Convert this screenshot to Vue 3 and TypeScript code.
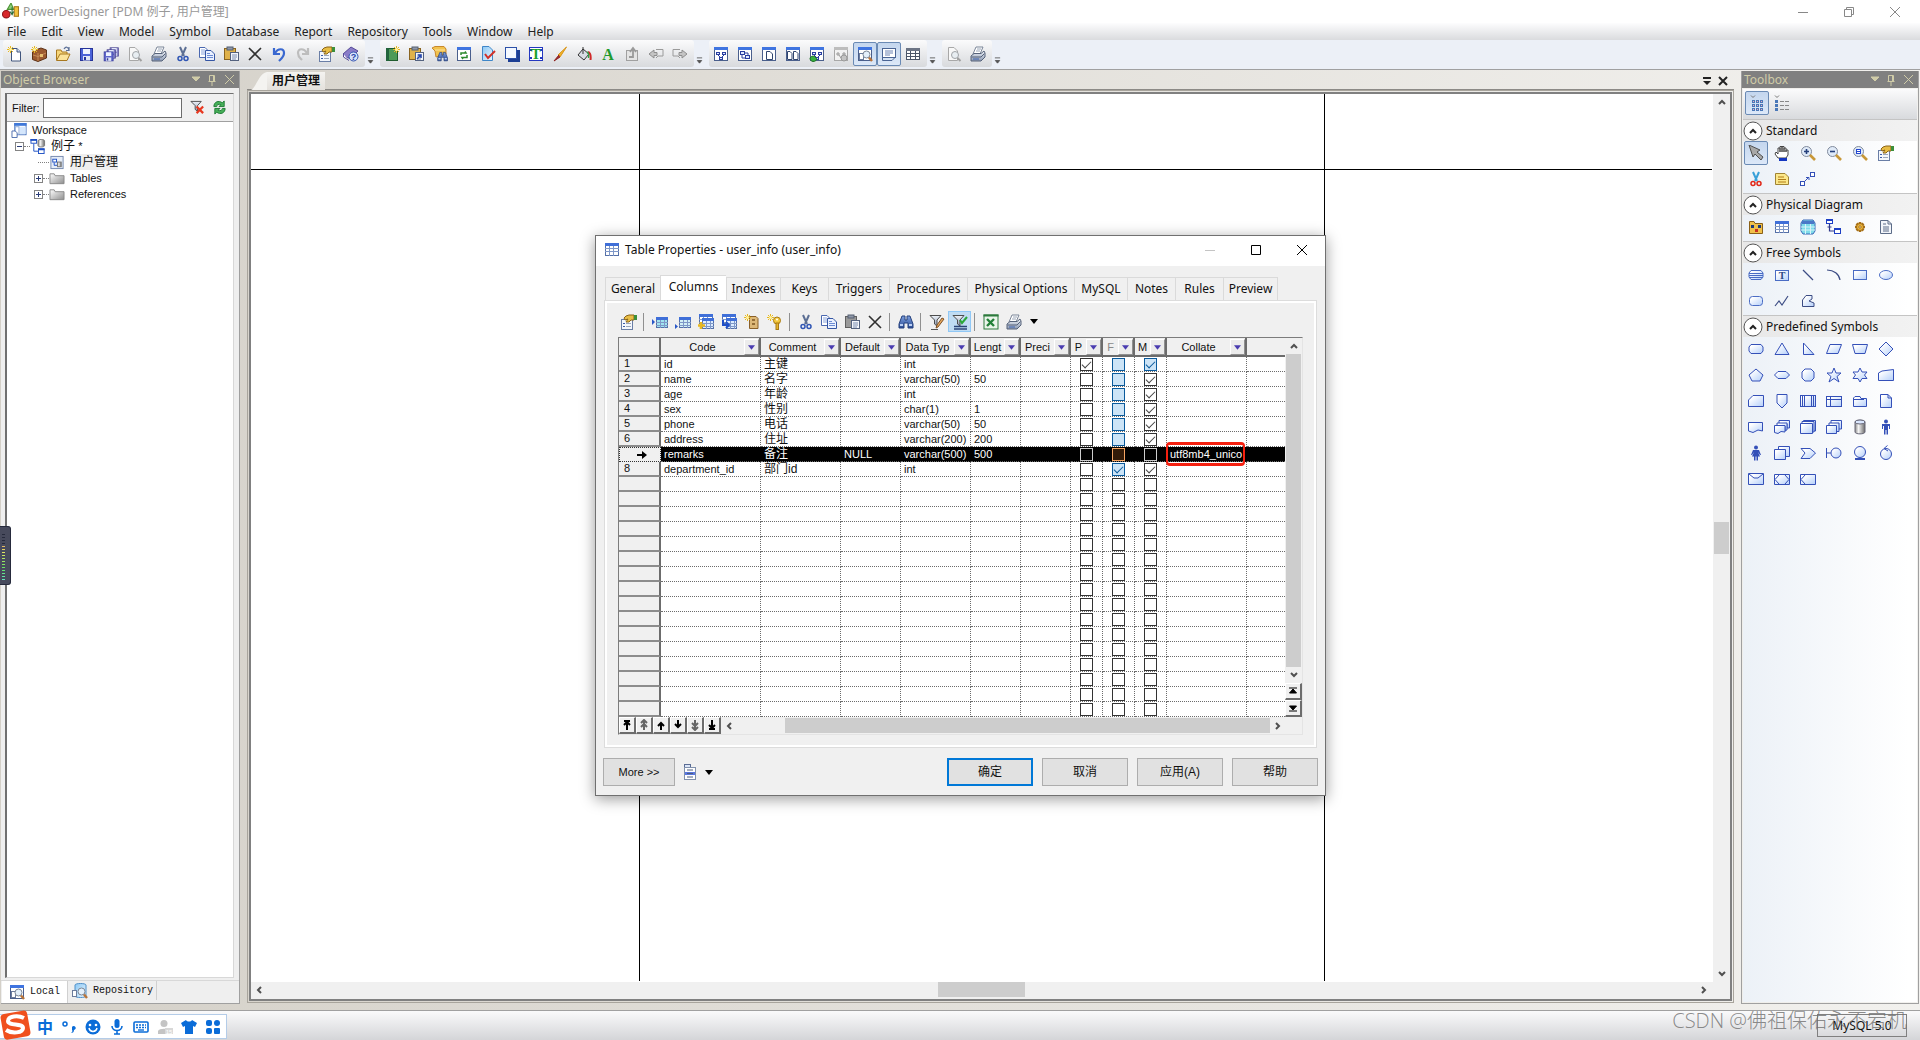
<script setup lang="ts">
import { ref } from 'vue'

type Tri = 'off' | 'on' | 'hot' | 'hotOn'

interface ColumnRow {
  code: string
  comment: string
  def?: string
  type: string
  length?: string
  p: Tri
  f: Tri
  m: Tri
  collate?: string
  selected?: boolean
}

const filter = ref('')

const menus = ['File', 'Edit', 'View', 'Model', 'Symbol', 'Database', 'Report', 'Repository', 'Tools', 'Window', 'Help']

// Small builders for 16x16 icon markup
const rc = (x: number, y: number, w: number, h: number, fill: string, stroke = 'none') =>
  `<rect x="${x}" y="${y}" width="${w}" height="${h}" fill="${fill}" stroke="${stroke}"/>`
const pa = (d: string, fill: string, stroke = 'none', sw = 1) =>
  `<path d="${d}" fill="${fill}" stroke="${stroke}" stroke-width="${sw}"/>`
const ci = (x: number, y: number, r: number, fill: string, stroke = 'none', sw = 1) =>
  `<circle cx="${x}" cy="${y}" r="${r}" fill="${fill}" stroke="${stroke}" stroke-width="${sw}"/>`
const tx = (x: number, y: number, size: number, fill: string, s: string, family = 'Liberation Serif') =>
  `<text x="${x}" y="${y}" font-size="${size}" font-weight="bold" fill="${fill}" text-anchor="middle" font-family="${family}">${s}</text>`

const star = pa('M3.5 0V7M0 3.5H7M1 1L6 6M6 1L1 6', 'none', '#e8b820') + ci(3.5, 3.5, 1.5, '#fff3a0')
const starTR = `<g transform="translate(9 0)">${star}</g>`
const lens = ci(8, 8, 3, '#e4f0fb', '#7d8796') + pa('M10.5 10.5L14 14', 'none', '#c98a3a', 2)
const printer =
  pa('M6 1H13L10 8H3Z', '#fff', '#7b8698') +
  pa('M7 3H11M6 5H10', 'none', '#9aa6b8') +
  pa('M1 10L4 7.500H11L14 5L15 7V11L11 15H1Z', 'url(#steel)', '#56637a') +
  pa('M1.500 11H11L14.500 7.500', 'none', '#56637a') +
  pa('M3 13H9', 'none', '#3f63b0', 1)
const floppy = (fill: string, stroke: string) =>
  rc(1.5, 2.5, 12, 12, fill, stroke) + rc(4, 3, 7, 5, '#eef3ff') + rc(4, 10, 7, 4.5, '#dfe6f5') + rc(5, 11, 2, 3, stroke)
const windowFrame = rc(1.5, 1.5, 13, 13, '#fff', '#4a5f8c') + rc(1, 1, 14, 3, '#3f74e0')
const miniDiagram =
  rc(3.5, 6.5, 3, 2, '#dfe8ff', '#2a3ea0') + rc(9.5, 6.5, 3, 2, '#dfe8ff', '#2a3ea0') +
  rc(6.5, 11.5, 3, 2, '#dfe8ff', '#2a3ea0') + pa('M5 9L7 11M11 9L9 11', 'none', '#2a3ea0')
const gridBody = (x: number, y: number, w: number, h: number, body: string) =>
  rc(x + 0.5, y + 0.5, w - 1, h - 1, body, '#5570a8') + rc(x, y, w, 3, '#3f6fd8') +
  pa(`M${x} ${y + 5.5}h${w}M${x} ${y + 8.5}h${w}M${x + 4.5} ${y + 3}v${h - 3}M${x + 8.5} ${y + 3}v${h - 3}`, 'none', '#7f98c8')
const hand =
  rc(0.5, 5.5, 11, 10, '#f4f7fc', '#6a7ea6') +
  pa('M2 9.500H4M2 12.500H4', 'none', '#3c5ca8') + pa('M5 9.500H10M5 12.500H10', 'none', '#9aa6bc') +
  pa('M3 4L5 2L8 1H13V6L10 6L8 8L5 8L7 5L4 6Z', '#e8bd45', '#8a6418') + rc(13, 1, 3, 5, '#3c8f3a')
const scissors = (blade: string, ring: string) =>
  pa('M5 1L9 10M11 1L7 10', 'none', blade, 2) + ci(5, 12.5, 2, 'none', ring, 1.5) + ci(11, 12.5, 2, 'none', ring, 1.5)
const board = (a: string, b: string) =>
  rc(1.5, 2.5, 11, 11, a, b) + rc(4, 1, 6, 3, '#8f98a8', '#555f70') + rc(7.5, 6.5, 8, 8, '#f3f6fb', '#54627f') +
  pa('M9 9H14M9 11H14M9 13H13', 'none', '#7a8cb0')
const copyPages =
  pa('M0.500 1.500H6L8.500 4V11.500H0.500Z', '#fff', '#4a68b0') + pa('M2 4H6M2 6H6M2 8H6', 'none', '#8aa4dc') +
  pa('M6.500 4.500H12L15.500 8V14.500H6.500Z', '#eaf1ff', '#3556a4') + pa('M8 7.500H11M8 9.500H14M8 11.500H14', 'none', '#6c8cd4')
const binoc =
  pa('M4 2H7V6H9V2H12L15 10V14H10V9H6V14H1V10Z', 'url(#navy)', '#25407c') + pa('M2 11H5M11 11H14', 'none', '#bcd0f4', 2)
const bluePage = pa('M2.500 0.500H9L12.500 4V14.500H2.500Z', 'url(#sky)', '#3f86c8')
const funnel = pa('M1 1.500H12L8 6V12L5.500 10V6Z', 'url(#steel)', '#4c4c4c')
const sh = '#3450b8'
const shape = (d: string) => pa(d, 'url(#pale)', sh)

const icons: Record<string, string> = {
  new: pa('M4.500 2.500H10L13.500 6V15H4.500Z', '#fff', '#40557c') + pa('M10 2.500V6H13.500', '#cfdcf4', '#40557c') + star,
  project: pa('M1.500 5L10 2L15.500 4V12L7 15.500L1.500 13.500Z', '#9c5a30', '#5e3216') + pa('M2 9L7 10.500L15 7M7 7V15', 'none', '#c88c58') + rc(9, 8, 3, 3, '#e8c070') + star,
  open: pa('M1.500 14V4H6L7 6H12V8', '#f6d67a', '#a87820') + pa('M1.500 14.500L5 8H15L12 14.500Z', '#fbe39a', '#a87820') + pa('M9 3C11 0 13 1 14 4M14 1V4.500H11', 'none', '#5b6f96', 1.2),
  save: floppy('#4a62d8', '#26349a'),
  saveAll: `<g transform="translate(6 0) scale(.7)">${floppy('#8a86c8', '#4b4790')}</g><g transform="translate(3 2) scale(.7)">${floppy('#7a76c4', '#443f8c')}</g><g transform="translate(0 4) scale(.75)">${floppy('#5f66cc', '#34389a')}</g>`,
  preview: pa('M2.500 1.500H8L11.500 5V14.500H2.500Z', '#f8f8f8', '#a8a8a8') + ci(9, 9, 3.5, '#e8eef2', '#a0a4a8') + pa('M11.500 12L14.500 15', 'none', '#a0a0a0', 2),
  print: printer,
  cut: scissors('#5c6f94', '#2f55b4'),
  copy: copyPages,
  paste: board('#e0b24a', '#8a6420'),
  pasteGray: board('#9a9a9a', '#606060'),
  del: pa('M2 2L14 14M14 2L2 14', 'none', '#303030', 1.6),
  undo: pa('M3 2V8H9M4 7C7 2 13 2 13 7C13 11 10 13 8 15', 'none', '#3a68d0', 2.2),
  redo: pa('M13 2V8H7M12 7C9 2 3 2 3 7C3 11 5 12 7 14', 'none', '#bdbdbd', 2.2),
  props: hand,
  help: pa('M0 8L8 1L15 5L8 12L4 12Z', '#8a7cc8', '#564a98') + pa('M0.500 8V11L6 14.500', '#fff', '#564a98') + ci(10.5, 10.5, 4.5, '#d6e2fa', '#3454b0') + tx(10.5, 13.5, 9, '#2443a8', '?', 'Liberation Sans'),
  book: rc(2.5, 2.5, 11, 12, '#4d9a58', '#1f5c2e') + rc(2, 2, 3, 13, '#22633a') + starTR,
  pasteLink: board('#e0b24a', '#8a6420') + pa('M9 13L13 9M10 9H13V12', 'none', '#2748b0', 1.4),
  find: pa('M0 2L3 0.500H12L14 3V8L4 11L3 5Z', '#f2c24c', '#c8882c') + pa('M3 4H13', 'none', '#fbe3a0') + `<g transform="translate(5 5) scale(.7)">${binoc}</g>`,
  refresh: windowFrame + pa('M5 9V7H10L9 5.500M11 9V11.500H6L7 13', 'none', '#2d8a2d', 1.5),
  check: bluePage + pa('M5 8L8 12L15 5', 'none', '#d03028', 2),
  shadow: rc(4, 4, 12, 12, '#1d3f94') + rc(1.5, 1.5, 11, 11, '#f4f8ff', '#2c50a8'),
  textTool: rc(1.5, 1.5, 13, 13, '#fff', '#2438c0') + pa('M1 4H4M12 4H15M1 12H4M12 12H15', 'none', '#2438c0', 2) + tx(8, 13, 14, '#18a028', 'T'),
  brush: pa('M14.500 1L6 9L8 11Z', '#f2b52a', '#d89418') + pa('M7 9L2 15L8 11', '#a02828', '#8c2020'),
  bucket: pa('M7 3L13 8L8 14L2 9Z', '#d8dce4', '#333') + pa('M7 1V8', 'none', '#333') + pa('M12 6C15 7 15 10 14.500 14', 'none', '#d02828', 2) + pa('M11 6C13 7 13 9 12.500 12', 'none', '#2fa048', 1.4),
  fontA: tx(8, 14, 16, '#1f9a2e', 'A'),
  rotate: rc(2.5, 4.5, 11, 10, '#e4e4e4', '#a0a0a0') + pa('M5 11H9V3M6 6L9 2L12 6', 'none', '#9a9a9a', 1.8),
  back: pa('M1 8L6 4V6.500H9V9.500H6V12Z', '#c4c4c4', '#8e8e8e') + pa('M8 3.500H15V10H10L8 12', 'none', '#9a9a9a'),
  forward: pa('M15 8L10 4V6.500H7V9.500H10V12Z', '#c4c4c4', '#8e8e8e') + pa('M8 3.500H1V10H6L8 12', 'none', '#9a9a9a'),
  dg1: windowFrame + miniDiagram,
  dg2: windowFrame + rc(3.5, 5.5, 4, 3, '#dfe8ff', '#2a3ea0') + rc(8.5, 9.5, 4, 3, '#dfe8ff', '#2a3ea0') + pa('M5 9V12H8M8 7H11V9', 'none', '#2a3ea0'),
  dg3: windowFrame + pa('M5.500 5.500H9L11.500 8V13.500H5.500Z', '#fff', '#30456e'),
  dg4: windowFrame + pa('M2.500 5.500H5L7 7.500V13.500H2.500Z', '#fff', '#30456e') + pa('M8.500 5.500H11L13 7.500V13.500H8.500Z', '#fff', '#30456e'),
  dg5: windowFrame + miniDiagram + pa('M1 12C3 9 6 10 7 12C9 13 7 15.500 4 15.500C2 15 1 14 1 12Z', '#38b040', '#1c7024'),
  dgGray: rc(1.5, 1.5, 13, 13, '#f2f2f2', '#a8a8a8') + rc(1, 1, 14, 3, '#bdbdbd') + pa('M4 7H6V9H4ZM10 7H12V9H10ZM6 9L8 12L10 9', 'none', '#999') + ci(11, 12, 3, '#c4c4c4', '#999'),
  lensWin: windowFrame + rc(2.5, 7.5, 4, 6, '#fff', '#6c7c9c') + ci(9.5, 8.5, 3.5, '#e4f0fb', '#7d8796') + pa('M12 11.500L15 15', 'none', '#b8743a', 2.4),
  lensDb: pa('M3 2C3 0 14 0 14 2V13C14 15 3 15 3 13Z', 'url(#sky)', '#4f8fc8') + rc(0.5, 7.5, 4, 6, '#fff', '#6c7c9c') + ci(9.5, 8.5, 3.5, '#e4f0fb', '#7d8796') + pa('M12 11.500L15 15', 'none', '#b8743a', 2.4),
  note: rc(1.5, 2.5, 13, 9, '#fff', '#4a6494') + pa('M4 5H12M4 7H12M4 9H9', 'none', '#6c84b4') + pa('M1.500 11.500V14.500H11L13.500 12', 'none', '#4a6494'),
  tableDark: rc(1.5, 2.5, 13, 11, '#fff', '#4c5668') + rc(1, 2, 14, 3, '#6c7484') + pa('M1 7.500H15M1 10.500H15M5.500 5V13M10.500 5V13', 'none', '#4c5668'),
  workspace: rc(3.5, 0.5, 12, 12, '#fff', '#3b68b8') + rc(3, 0, 13, 3, '#3f78d8') + rc(9, 4, 6, 8, '#d4e6fc') + rc(4, 4, 4, 8, '#fff', '#86a4d4') + pa('M0.500 8.500H4L6 10.500V15.500H0.500Z', '#fff', '#4c6cac'),
  model: pa('M8 2C8 0 15 0 15 2V7C15 9 8 9 8 7Z', 'url(#cyl)', '#777') + rc(0.5, 0.5, 6, 4, '#fff', '#1d4fc4') + rc(0, 0, 7, 2, '#1d4fc4') + pa('M3.500 5V13H8', 'none', '#1d4fc4') + rc(8.5, 10.5, 6, 5, '#fff', '#1d4fc4') + rc(8, 10, 7, 2, '#1d4fc4'),
  diagram: rc(1.5, 1.5, 13, 13, '#e6edf8', '#7286ac') + rc(3.5, 4.5, 4, 3, '#fff', '#1d4fc4') + pa('M5 8V11H8', 'none', '#1d4fc4') + rc(8.5, 7.5, 4, 5, 'url(#cyl)', '#777'),
  folder: pa('M0.500 13.500V3H5L6 5H15.500V13.500Z', 'url(#fold)', '#8a8a8a'),
  filterClear: funnel + pa('M7 7L14 14M14 7L7 14', 'none', '#e83820', 2.4),
  reload: pa('M2 7C2 2 7 0 11 3L13 1V7H7.500L9.500 5C7 4 5 5 5 7Z', '#46b058', '#1e7a34') + pa('M14 9C14 14 9 16 5 13L3 15V9H8.500L6.500 11C9 12 11 11 11 9Z', '#46b058', '#1e7a34'),
  table: gridBody(1, 1, 14, 13, '#fff'),
  rowIns: gridBody(4, 3, 12, 11, '#9fe4f0') + pa('M0 5L3 8L0 11Z', '#2a58c8'),
  rowAdd: gridBody(4, 3, 12, 11, '#d2f0f6') + pa('M0 10L3 12.500L0 15Z', '#2a58c8'),
  colAdd: gridBody(1, 0, 14, 10, '#fff') + gridBody(4, 4, 12, 11, '#dcecff') + pa('M3 8V15M0 11.500H7', 'none', '#e8b820', 2.6),
  colRep: gridBody(1, 0, 14, 10, '#fff') + gridBody(5, 4, 11, 11, '#dcecff') + pa('M2 6V11H7M5 8L8 11L5 14', 'none', '#1f4fc8', 2),
  domain: pa('M5.500 2.500H12L14 4.500V14.500H5.500Z', '#ddb878', '#8a6028') + pa('M8 6H11M8 10H11', 'none', '#7c5420', 1.5) + star,
  key: ci(10, 6.5, 3.5, '#f4c93c', '#a87a14') + ci(10, 5.5, 1, '#fff') + rc(9, 9, 2.5, 6.5, '#e8b62c', '#a87a14') + star,
  binoc,
  filterEdit: funnel + pa('M15 5L9 13L7 14L8 11L13 4Z', '#e8a85c', '#7c5028') + pa('M2 15.500H9', 'none', '#555'),
  filterOn: funnel + pa('M8 6L10 9L15 3', 'none', '#2aa83a', 2) + pa('M2 12.500H15M2 15H15', 'none', '#2b4478', 1.6),
  excel: rc(1, 1, 14, 14, '#eaf5ea', '#2c7a3c') + rc(0.5, 0.5, 15, 2, '#2c7a3c') + pa('M4 5L11 12M11 5L4 12', 'none', '#228038', 2.4),
  sheet: rc(2.5, 0.5, 6, 3, '#dce6f8', '#5a6c94') + rc(2.5, 3.500, 11, 12, '#fff', '#8090ac') + rc(3, 8, 10, 3, '#5a78e0') + pa('M5 6H11M5 9.500H11M5 13H11', 'none', '#4c5c7c'),
  pointer: pa('M1 0L5 12L7 9L13 15L15 12L9 7L12 5Z', '#a8a8a8', '#505050'),
  palm: pa('M4 13L1 9L2 7L4 9V3H6V7V1.500H8V7V1.500H10V7V3H12V7V5H14V10L12 13Z', '#fff', '#444') + rc(5, 13, 8, 3, '#1436c0'),
  zoomIn: ci(6.5, 6.5, 5, '#dfeaf8', '#808a9c') + pa('M4 6.500H9M6.500 4V9', 'none', '#25407c', 1.6) + pa('M10 10L15 15', 'none', '#c89838', 2.6),
  zoomOut: ci(6.5, 6.5, 5, '#dfeaf8', '#808a9c') + pa('M4 6.500H9', 'none', '#25407c', 1.6) + pa('M10 10L15 15', 'none', '#c89838', 2.6),
  zoomPage: ci(6.5, 6.5, 5, '#dfeaf8', '#808a9c') + rc(4.5, 4.5, 4, 4, '#fff', '#2448d0') + pa('M4 6.500H9', 'none', '#2448d0') + pa('M10 10L15 15', 'none', '#c89838', 2.6),
  cutRed: scissors('#38a0d8', '#e02818'),
  memo: pa('M1.500 2.500H11L14.500 6V13.500H1.500Z', '#fce88a', '#a08434') + pa('M4 6H10M4 8.500H12M4 11H12', 'none', '#b07c18'),
  link: rc(0.5, 10.5, 4, 4, '#fff', sh) + rc(10.5, 1.5, 4, 4, '#fff', sh) + pa('M5 10L9 6M6 6.500H9V9', 'none', sh),
  pkg: pa('M1.500 2.500H6L7 4.500H14.500V14.500H1.500Z', '#f0c04a', '#8a6018') + rc(3, 6, 3, 3, '#1e3a78') + rc(10, 6, 3, 3, '#1e3a78') + rc(7, 10, 3, 3, '#c83020'),
  tbl: gridBody(1, 2, 14, 12, '#fff'),
  view: pa('M1 4L3 1H13L15 4V12L13 15H3L1 12Z', '#7fdcea', '#3a68b8') + rc(2, 2, 12, 3, '#4a78c8') + pa('M1 8H15M1 11H15M5.500 5V15M10.500 5V15', 'none', '#d8f4f8'),
  refLink: rc(0.5, 0.5, 6, 4, '#fff', '#1d3fc4') + pa('M3.500 5V12H8M1.500 8H5.500M3.500 6V9', 'none', '#303a8c', 1.2) + rc(8.5, 9.5, 6, 5, '#fff', '#1d3fc4') + rc(8, 9, 7, 2, '#1d3fc4') + rc(0, 0, 7, 2, '#1d3fc4'),
  gear: pa('M8 3V13M3 8H13M4.500 4.500L11.500 11.500M11.500 4.500L4.500 11.500', 'none', '#a87018', 2.6) + ci(8, 8, 3.5, '#f0b83c', '#a06c14') + ci(8, 8, 1.2, '#fff', '#a06c14'),
  file: pa('M2.500 1.500H10L13.500 5V14.500H2.500Z', '#f2f5fa', '#5c6c88') + pa('M10 1.500V5H13.500M5 5H8M5 8H11M5 10H11M5 12H11', 'none', '#5c6c88'),
  title: pa('M3 3.500H13L15 6V10L13 12.500H3L1 10V6Z', 'url(#pale)', '#4a6cc4') + pa('M1 6.500H15M1 8.500H15M1 10.500H15', 'none', '#4a6cc4'),
  textBox: rc(1.5, 3.500, 13, 10, 'url(#pale)', '#4a6cc4') + tx(8, 12, 10, '#2c4684', 'T'),
  line: pa('M3 3L13 13', 'none', '#3c4c84', 1.2),
  arc: pa('M1 3C8 3 13 7 14 13', 'none', '#3c4c84', 1.2),
  rect: rc(1.5, 3.5, 13, 9, 'url(#pale)', '#4a6cc4'),
  ellipse: `<ellipse cx="8" cy="8" rx="6.5" ry="4.500" fill="url(#pale)" stroke="#4a6cc4"/>`,
  rrect: `<rect x="1.500" y="3.500" width="13" height="9" rx="3" fill="url(#pale)" stroke="#4a6cc4"/>`,
  poly: pa('M1 13L5 8L8 12L14 3', 'none', '#3c4c84', 1.2),
  blob: pa('M2.500 13.500V7L6 2.500H12V6L9 8L14 10V13.500Z', 'url(#pale)', '#3c4c84'),
  s1: shape('M3 3.500H13L15 6V10L13 12.500H3L1 10V6Z'),
  s2: shape('M8 2L15 13.500H1Z'),
  s3: shape('M3.500 2L14 13.500H3.500Z'),
  s4: shape('M4 3.500H15.500L12 12.500H0.500Z'),
  s5: shape('M0.500 3.500H15.500L13 12.500H3Z'),
  s6: shape('M8 1L15 8L8 15L1 8Z'),
  s7: shape('M8 2L15 8L12 14H4L1 8Z'),
  s8: shape('M4 4.500H12L15.500 8L12 11.500H4L0.500 8Z'),
  s9: shape('M5 2H11L14 5V11L11 14H5L2 11V5Z'),
  s10: shape('M8 1L10 6H15L11 9.500L13 15L8 11.500L3 15L5 9.500L1 6H6Z'),
  s11: shape('M8 1L10 5H15L12.500 8L15 11.500H10L8 15L6 11.500H1L3.500 8L1 5H6Z'),
  s12: shape('M0.500 13.500V6L4 4L15.500 2.500V13.500Z'),
  s13: shape('M0.500 13.500V7L5 2.500H15.500V13.500Z'),
  s14: shape('M3 1.500H13V10L8 15L3 10Z'),
  s15: rc(0.5, 2.5, 15, 11, 'url(#pale)', sh) + pa('M4.500 3V13M11.500 3V13M2.500 3V13M13.500 3V13', 'none', sh),
  s16: rc(0.5, 3.5, 15, 10, 'url(#pale)', sh) + pa('M1 6.500H15M4.500 3V13', 'none', sh),
  s17: shape('M1.500 13.500V5L3 3.500H8L9 5.500H14.500V13.500Z') + pa('M2 6.500H12', 'none', sh),
  s18: shape('M2.500 1.500H10L13.500 5V14.500H2.500Z') + pa('M10 1.500V5H13.500', 'none', sh),
  s19: shape('M0.500 3.500H14.500V12L10 11L5 13.500L0.500 12Z'),
  s20: shape('M5 1.500H15.500V9H13V5H5Z') + shape('M3 4H13V11L11 11.500V7H3Z') + shape('M0.500 6.500H11V13L7 12.500L4 14.500L0.500 13.500Z'),
  s21: shape('M3.500 1.500H15.500V12H3.500Z') + shape('M2 2.500H14V13H2Z') + shape('M0.500 4.500H12.500V14.500H0.500Z'),
  s22: shape('M5 1.500H15.500V10H5Z') + shape('M3 4H13V12.500H3Z') + shape('M0.500 6.500H10.500V14.500H0.500Z'),
  s23: pa('M3 3C3 0.500 13 0.500 13 3V13C13 15.500 3 15.500 3 13Z', 'url(#cyl)', '#667') + `<ellipse cx="8" cy="3" rx="5" ry="2" fill="#dbe8ff" stroke="#667"/>`,
  s24: ci(8, 2.5, 2, sh) + pa('M4 5H12V10H11V7H10V15.500H8.500V11H7.500V15.500H6V7H5V10H4Z', sh),
  s25: ci(8, 2.5, 2, sh) + pa('M5 5H11L13 10H12L10 7L12 11.500H10V15.500H8.500V11.500H7.500V15.500H6V11.500H4L6 7L4 10H3Z', sh),
  s26: shape('M4.500 1.500H15.500V11.500H4.500Z') + shape('M0.500 4.500H11.500V14.500H0.500Z'),
  s27: shape('M1 3.500H10L15.500 8L10 13.500H1L5 8Z'),
  s28: ci(10, 8, 5, 'url(#pale)', sh) + pa('M0.500 3V13M1 8H5', 'none', sh),
  s29: ci(8, 7, 5.5, 'url(#pale)', sh) + pa('M3 14H13', 'none', sh, 2),
  s30: ci(8, 9, 5.5, 'url(#pale)', sh) + pa('M9.500 0.500L6 3.500L10 6', 'none', sh),
  s31: shape('M0.500 2.500H15.500V13.500H0.500Z') + pa('M1 3L6 7H10L15 3', 'none', sh),
  s32: shape('M0.500 3.500H15.500V13.500H0.500Z') + pa('M5 4L1 8.500L5 13M11 4L15 8.500L11 13', 'none', sh),
  s33: shape('M0.500 3.500H15.500V13.500H0.500Z') + pa('M5 4L1 8.500L5 13', 'none', sh),
  gridView: [0, 1, 2].map(r => [0, 1, 2].map(c => rc(3 + c * 4, 5 + r * 4, 3, 3, '#4a78b8') + rc(4 + c * 4, 6 + r * 4, 1, 1, '#f4a8b8')).join('')).join('') + pa('M2 0.500L4 2.500L6 0.500', 'none', '#777'),
  listView: [0, 1, 2].map(r => rc(1, 5 + r * 4, 3, 3, '#4a78b8') + pa(`M6 ${6.5 + r * 4}h4m1 0h4`, 'none', '#888')).join('') + pa('M1 0.500L3 2.500L5 0.500', 'none', '#777'),
}

const toolGroups: string[][] = [
  ['new', 'project', 'open', 'save', 'saveAll', 'preview', 'print', 'cut', 'copy', 'paste', 'del', 'undo', 'redo', 'props', 'help'],
  ['book', 'pasteLink', 'find', 'refresh', 'check', 'shadow', 'textTool', 'brush', 'bucket', 'fontA', 'rotate', 'back', 'forward'],
  ['dg1', 'dg2', 'dg3', 'dg4', 'dg5', 'dgGray', 'lensWin', 'note', 'tableDark'],
  ['preview', 'print'],
]
const pressed = ['lensWin', 'note']

const sections = [
  { name: 'Standard', items: ['pointer', 'palm', 'zoomIn', 'zoomOut', 'zoomPage', 'props', 'cutRed', 'memo', 'link'] },
  { name: 'Physical Diagram', items: ['pkg', 'tbl', 'view', 'refLink', 'gear', 'file'] },
  { name: 'Free Symbols', items: ['title', 'textBox', 'line', 'arc', 'rect', 'ellipse', 'rrect', 'poly', 'blob'] },
  { name: 'Predefined Symbols', items: Array.from({ length: 33 }, (_, i) => 's' + (i + 1)) },
]

const tabs = [
  { name: 'General', width: 55 },
  { name: 'Columns', width: 66 },
  { name: 'Indexes', width: 54 },
  { name: 'Keys', width: 48 },
  { name: 'Triggers', width: 61 },
  { name: 'Procedures', width: 78 },
  { name: 'Physical Options', width: 107 },
  { name: 'MySQL', width: 53 },
  { name: 'Notes', width: 48 },
  { name: 'Rules', width: 48 },
  { name: 'Preview', width: 55 },
]

const dialogTools = ['props', '|', 'rowIns', 'rowAdd', 'colAdd', 'colRep', 'domain', 'key', '|', 'cut', 'copy', 'pasteGray', 'del', '|', 'binoc', '|', 'filterEdit', 'filterOn', '|', 'excel', 'print']

const heads = [
  { name: 'Code', width: 100 },
  { name: 'Comment', width: 80 },
  { name: 'Default', width: 60 },
  { name: 'Data Typ', width: 70 },
  { name: 'Lengt', width: 50 },
  { name: 'Preci', width: 50 },
  { name: 'P', width: 32 },
  { name: 'F', width: 32 },
  { name: 'M', width: 32 },
  { name: 'Collate', width: 80 },
]

const rows: ColumnRow[] = [
  { code: 'id', comment: '主键', type: 'int', p: 'on', f: 'hot', m: 'hotOn' },
  { code: 'name', comment: '名字', type: 'varchar(50)', length: '50', p: 'off', f: 'hot', m: 'on' },
  { code: 'age', comment: '年龄', type: 'int', p: 'off', f: 'hot', m: 'on' },
  { code: 'sex', comment: '性别', type: 'char(1)', length: '1', p: 'off', f: 'hot', m: 'on' },
  { code: 'phone', comment: '电话', type: 'varchar(50)', length: '50', p: 'off', f: 'hot', m: 'on' },
  { code: 'address', comment: '住址', type: 'varchar(200)', length: '200', p: 'off', f: 'hot', m: 'on' },
  { code: 'remarks', comment: '备注', def: 'NULL', type: 'varchar(500)', length: '500', p: 'off', f: 'hot', m: 'off', collate: 'utf8mb4_unico', selected: true },
  { code: 'department_id', comment: '部门id', type: 'int', p: 'off', f: 'hotOn', m: 'on' },
  ...Array.from({ length: 16 }, (): ColumnRow => ({ code: '', comment: '', type: '', p: 'off', f: 'off', m: 'off' })),
]
const flags = ['p', 'f', 'm'] as const
const isOn = (t: Tri) => t === 'on' || t === 'hotOn'
const isHot = (t: Tri) => t === 'hot' || t === 'hotOn'

const moves = [
  { label: 'Move to top', d: 'M3 2H9M6 3V11M3 6L6 3L9 6', dim: false },
  { label: 'Page up', d: 'M6 1V11M3 4L6 1L9 4M3 8L6 5L9 8', dim: true },
  { label: 'Move up', d: 'M6 4V11M3 7L6 4L9 7', dim: false },
  { label: 'Move down', d: 'M6 1V8M3 5L6 8L9 5', dim: false },
  { label: 'Page down', d: 'M6 1V11M3 8L6 11L9 8M3 4L6 7L9 4', dim: true },
  { label: 'Move to bottom', d: 'M3 10H9M6 1V9M3 6L6 9L9 6', dim: false },
]

const meter = Array.from({ length: 16 }, (_, i) => (i < 4 ? '#262a3c' : `hsl(${40 + (i - 4) * 11} 70% 64%)`))
</script>

<template>
  <div class="app">
    <svg class="defs" width="0" height="0" aria-hidden="true">
      <defs>
        <linearGradient id="pale" x1="0" y1="0" x2="1" y2="1"><stop offset="0.2" stop-color="#fff" /><stop offset="1" stop-color="#b4cffa" /></linearGradient>
        <linearGradient id="sky" x1="0" y1="0" x2="1" y2="1"><stop offset="0" stop-color="#8cc8f4" /><stop offset="1" stop-color="#e8f5ff" /></linearGradient>
        <linearGradient id="steel" x1="0" y1="0" x2="0" y2="1"><stop offset="0" stop-color="#f0f4fa" /><stop offset="1" stop-color="#8a98b0" /></linearGradient>
        <linearGradient id="navy" x1="0" y1="0" x2="0" y2="1"><stop offset="0" stop-color="#7ca0e0" /><stop offset="1" stop-color="#2c4c94" /></linearGradient>
        <linearGradient id="cyl"><stop offset="0" stop-color="#8a8a8a" /><stop offset="0.35" stop-color="#f4f4f4" /><stop offset="1" stop-color="#6a6a6a" /></linearGradient>
        <linearGradient id="fold" x1="0" y1="0" x2="1" y2="1"><stop offset="0" stop-color="#fff" /><stop offset="1" stop-color="#8e8e8e" /></linearGradient>
      </defs>
    </svg>

    <header class="titlebar">
      <svg class="logo" viewBox="0 0 16 16"><path d="M5 6L8.500 0L11 6Z" fill="#8cd07a" stroke="#4c9434" /><rect x="11.500" y="3.500" width="4" height="9" fill="#f2c03c" stroke="#a87818" /><circle cx="4" cy="10.500" r="3.500" fill="#d8282c" stroke="#8c1418" /><path d="M9.500 4V11M7.500 8L9.500 11L11 8" fill="none" stroke="#286c38" /></svg>
      <span class="app-title">PowerDesigner [PDM 例子, 用户管理]</span>
      <div class="win-buttons">
        <button aria-label="Minimize"><svg viewBox="0 0 12 12"><path d="M1 6.500H11" /></svg></button>
        <button aria-label="Restore"><svg viewBox="0 0 12 12"><path d="M1.500 3.500H8.500V10.500H1.500ZM3.500 3.500V1.500H10.500V8.500H8.500" /></svg></button>
        <button aria-label="Close"><svg viewBox="0 0 12 12"><path d="M1 1L11 11M11 1L1 11" /></svg></button>
      </div>
    </header>

    <nav class="menubar">
      <button v-for="m in menus" :key="m">{{ m }}</button>
    </nav>

    <div class="toolbar">
      <template v-for="(g, gi) in toolGroups" :key="gi">
        <div class="tool-group">
          <button v-for="n in g" :key="n" class="tool" :class="{ pressed: pressed.includes(n) }" :aria-label="n">
            <svg viewBox="0 0 16 16" v-html="icons[n]" />
          </button>
        </div>
        <button class="overflow" aria-label="Toolbar options"><svg viewBox="0 0 8 8"><path d="M1 1H7M1.500 4H6.500L4 7Z" fill="#555" stroke="#555" /></svg></button>
      </template>
    </div>

    <main class="workarea">
      <aside class="browser">
        <div class="pane-head">
          <span>Object Browser</span>
          <svg viewBox="0 0 44 12"><path d="M1 3H9L5 7Z" fill="#d0cca8" /><path d="M17.500 7.500H24.500M18.500 7V1.500H23.500V7M22.500 2V7M21 8V12" /><path d="M34 1L43 10M43 1L34 10" /></svg>
        </div>
        <div class="browser-body">
          <div class="filter">
            <label for="tree-filter">Filter:</label>
            <input id="tree-filter" v-model="filter" type="text" />
            <button aria-label="Clear filter"><svg viewBox="0 0 16 16" v-html="icons.filterClear" /></button>
            <button aria-label="Refresh"><svg viewBox="0 0 16 16" v-html="icons.reload" /></button>
          </div>
          <ul class="tree">
            <li class="lv0"><svg class="ti" viewBox="0 0 16 16" v-html="icons.workspace" /><span>Workspace</span></li>
            <li class="lv1"><i class="exp minus" /><i class="dash" /><svg class="ti" viewBox="0 0 16 16" v-html="icons.model" /><span class="cjk">例子 <small>*</small></span></li>
            <li class="lv2"><i class="dash long" /><svg class="ti" viewBox="0 0 16 16" v-html="icons.diagram" /><span class="cjk current">用户管理</span></li>
            <li class="lv2x"><i class="exp plus" /><i class="dash" /><svg class="ti" viewBox="0 0 16 16" v-html="icons.folder" /><span>Tables</span></li>
            <li class="lv2x"><i class="exp plus" /><i class="dash" /><svg class="ti" viewBox="0 0 16 16" v-html="icons.folder" /><span>References</span></li>
          </ul>
        </div>
        <div class="browser-tabs">
          <button class="on"><svg viewBox="0 0 16 16" v-html="icons.lensWin" />Local</button>
          <button><svg viewBox="0 0 16 16" v-html="icons.lensDb" />Repository</button>
        </div>
      </aside>

      <section class="document">
        <div class="doc-tabs">
          <svg class="doc-slope" viewBox="0 0 16 18" preserveAspectRatio="none"><path d="M0 18C5 16 8 1 16 0V18Z" fill="#f4f3f0" /></svg>
          <button class="doc-tab">用户管理</button>
          <div class="doc-actions">
            <button aria-label="Window list"><svg viewBox="0 0 12 12"><path d="M2 3H10" stroke="#222" stroke-width="2" /><path d="M2 6H10L6 10Z" fill="#222" /></svg></button>
            <button aria-label="Close diagram"><svg viewBox="0 0 12 12"><path d="M2 2L10 10M10 2L2 10" stroke="#222" stroke-width="2" /></svg></button>
          </div>
        </div>
        <div class="doc-frame">
          <div class="canvas">
            <i class="guide-h" />
            <i class="guide-v a" />
            <i class="guide-v b" />
          </div>
          <div class="vbar">
            <svg class="chev" viewBox="0 0 10 10"><path d="M2 7L5 4L8 7" /></svg>
            <i class="thumb" />
            <svg class="chev" viewBox="0 0 10 10"><path d="M2 3L5 6L8 3" /></svg>
          </div>
          <div class="hbar">
            <svg class="chev" viewBox="0 0 10 10"><path d="M7 2L4 5L7 8" /></svg>
            <i class="thumb" />
            <svg class="chev" viewBox="0 0 10 10"><path d="M3 2L6 5L3 8" /></svg>
          </div>
        </div>
      </section>

      <aside class="toolbox">
        <div class="pane-head">
          <span>Toolbox</span>
          <svg viewBox="0 0 44 12"><path d="M1 3H9L5 7Z" fill="#d0cca8" /><path d="M17.500 7.500H24.500M18.500 7V1.500H23.500V7M22.500 2V7M21 8V12" /><path d="M34 1L43 10M43 1L34 10" /></svg>
        </div>
        <div class="toolbox-body">
          <div class="view-bar">
            <button class="tool pressed" aria-label="Icons"><svg viewBox="0 0 16 16" v-html="icons.gridView" /></button>
            <button class="tool" aria-label="List"><svg viewBox="0 0 16 16" v-html="icons.listView" /></button>
          </div>
          <template v-for="s in sections" :key="s.name">
            <button class="sec-head">
              <svg viewBox="0 0 20 20"><circle cx="10" cy="10" r="9" fill="#fff" stroke="#555" /><path d="M7 12L10 9L13 12" fill="none" stroke="#222" stroke-width="2" /></svg>
              {{ s.name }}
            </button>
            <div class="palette">
              <button v-for="n in s.items" :key="n" class="tool" :class="{ pressed: n === 'pointer' }" :aria-label="n">
                <svg viewBox="0 0 16 16" v-html="icons[n]" />
              </button>
            </div>
          </template>
        </div>
      </aside>
    </main>

    <footer class="status">
      <div class="ime">
        <svg class="sogou" viewBox="0 0 32 30"><rect x="2" y="2" width="27" height="26" rx="4" fill="#f0501e" transform="rotate(-10 16 15)" /><path d="M24 8C18 5 8 6 8 11C8 16 23 13 23 18C23 23 12 24 6 20" fill="none" stroke="#fff" stroke-width="4" /></svg>
        <span class="zh">中</span>
        <svg viewBox="0 0 16 16"><circle cx="4" cy="5" r="2" fill="none" stroke="#0a6cd8" stroke-width="1.500" /><path d="M11 8a2 2 0 1 1 2 3c0 2-1 3-3 3 1-1 2-2 1-3z" fill="#0a6cd8" /></svg>
        <svg viewBox="0 0 16 16"><circle cx="8" cy="8" r="7.500" fill="#0a6cd8" /><circle cx="5" cy="6" r="1.300" fill="#fff" /><circle cx="11" cy="6" r="1.300" fill="#fff" /><path d="M4 9C5 13.500 11 13.500 12 9" fill="none" stroke="#fff" stroke-width="1.500" /></svg>
        <svg viewBox="0 0 16 16"><rect x="5.500" y="0" width="5" height="9" rx="2.500" fill="#0a6cd8" /><path d="M3 7C3 13 13 13 13 7M8 11V15M5 15H11" fill="none" stroke="#0a6cd8" stroke-width="1.600" /></svg>
        <svg viewBox="0 0 16 16"><rect x="1" y="3" width="14" height="10" rx="1" fill="#fff" stroke="#0a6cd8" stroke-width="1.600" /><path d="M3 6H13M3 8.500H13" stroke="#0a6cd8" stroke-width="1.600" stroke-dasharray="2 1" /><path d="M5 11H11" stroke="#0a6cd8" stroke-width="1.400" /></svg>
        <svg viewBox="0 0 16 16"><circle cx="7" cy="4.500" r="3.500" fill="#c4c4c4" /><path d="M1 15V12C2 9 12 9 13 12V15Z" fill="#c4c4c4" /><rect x="8" y="9" width="8" height="6" fill="#d8d8d8" /><text x="12" y="14.500" font-size="6" fill="#fff" text-anchor="middle" font-family="Liberation Sans">15</text></svg>
        <svg viewBox="0 0 16 16"><path d="M5 1C6 3 10 3 11 1L16 4L14 8L12 7V15H4V7L2 8L0 4Z" fill="#0a6cd8" /></svg>
        <svg viewBox="0 0 16 16" fill="#0a6cd8"><rect x="1" y="1" width="6" height="6" rx="2" /><rect x="9" y="1" width="6" height="6" rx="3" /><rect x="1" y="9" width="6" height="6" rx="2" /><rect x="9" y="9" width="6" height="6" rx="1" /></svg>
      </div>
      <span class="dbms">MySQL 5.0</span>
      <span class="watermark">CSDN @佛祖保佑永不宕机</span>
    </footer>

    <div class="meter"><i v-for="(c, i) in meter" :key="i" :style="{ background: c }" /></div>

    <div class="dialog" role="dialog" aria-label="Table Properties">
      <div class="dlg-title">
        <svg viewBox="0 0 16 16" v-html="icons.table" />
        <span>Table Properties - user_info (user_info)</span>
        <div class="win-buttons">
          <button class="faint" aria-label="Minimize"><svg viewBox="0 0 12 12"><path d="M1 6.500H11" /></svg></button>
          <button aria-label="Maximize"><svg viewBox="0 0 12 12"><path d="M1.500 1.500H10.500V10.500H1.500Z" /></svg></button>
          <button aria-label="Close"><svg viewBox="0 0 12 12"><path d="M1 1L11 11M11 1L1 11" /></svg></button>
        </div>
      </div>

      <div class="dlg-tabs" role="tablist">
        <button v-for="t in tabs" :key="t.name" role="tab" :class="{ on: t.name === 'Columns' }" :style="{ width: t.width + 'px' }">{{ t.name }}</button>
      </div>

      <div class="page">
        <div class="dlg-tools">
          <template v-for="(n, i) in dialogTools" :key="i">
            <i v-if="n === '|'" class="sep" />
            <button v-else :class="{ lit: n === 'filterOn' }" :aria-label="n"><svg viewBox="0 0 16 16" v-html="icons[n]" /></button>
          </template>
          <svg class="tri" viewBox="0 0 8 5"><path d="M0 0H8L4 5Z" /></svg>
        </div>

        <div class="grid">
          <div class="grid-main">
            <table>
              <colgroup>
                <col style="width: 42px" />
                <col v-for="h in heads" :key="h.name" :style="{ width: h.width + 'px' }" />
                <col />
              </colgroup>
              <thead>
                <tr>
                  <th class="corner" />
                  <th v-for="h in heads" :key="h.name" :class="{ dim: h.name === 'F' }">
                    <div><span>{{ h.name }}</span><button :aria-label="'Filter ' + h.name"><svg viewBox="0 0 8 5"><path d="M0 0H8L4 5Z" /></svg></button></div>
                  </th>
                  <th />
                </tr>
              </thead>
              <tbody>
                <tr v-for="(r, i) in rows" :key="i" :class="{ sel: r.selected }">
                  <th scope="row">
                    <svg v-if="r.selected" viewBox="0 0 10 8"><path d="M0 3H5V0L10 4L5 8V5H0Z" /></svg>
                    <template v-else-if="r.code">{{ i + 1 }}</template>
                  </th>
                  <td>{{ r.code }}</td>
                  <td class="zhc">{{ r.comment }}</td>
                  <td>{{ r.def }}</td>
                  <td>{{ r.type }}</td>
                  <td>{{ r.length }}</td>
                  <td />
                  <td v-for="k in flags" :key="k" class="chk">
                    <input type="checkbox" :checked="isOn(r[k])" :class="{ hot: isHot(r[k]) }" :aria-label="k + (i + 1)" />
                  </td>
                  <td class="coll"><span v-if="r.collate" class="marked">{{ r.collate }}</span></td>
                  <td />
                </tr>
              </tbody>
            </table>
            <div class="gv">
              <svg class="chev" viewBox="0 0 10 10"><path d="M2 7L5 4L8 7" /></svg>
              <i class="gthumb" />
              <svg class="chev" viewBox="0 0 10 10"><path d="M2 3L5 6L8 3" /></svg>
              <button class="raised" aria-label="First"><svg viewBox="0 0 8 8"><path d="M0 1H8M4 2L7.500 6H0.500Z" /></svg></button>
              <button class="raised" aria-label="Last"><svg viewBox="0 0 8 8"><path d="M0 7H8M4 6L7.500 2H0.500Z" /></svg></button>
            </div>
          </div>
          <div class="gh">
            <button v-for="m in moves" :key="m.label" class="raised" :class="{ dim: m.dim }" :aria-label="m.label"><svg viewBox="0 0 12 12"><path :d="m.d" /></svg></button>
            <svg class="chev" viewBox="0 0 10 10"><path d="M7 2L4 5L7 8" /></svg>
            <i class="gthumb" />
            <svg class="chev" viewBox="0 0 10 10"><path d="M3 2L6 5L3 8" /></svg>
          </div>
        </div>
      </div>

      <div class="dlg-foot">
        <button class="btn more">More &gt;&gt;</button>
        <button class="menu-btn" aria-label="Report"><svg class="sheet" viewBox="0 0 16 16" v-html="icons.sheet" /><svg class="tri" viewBox="0 0 8 5"><path d="M0 0H8L4 5Z" /></svg></button>
        <div class="actions">
          <button class="btn primary">确定</button>
          <button class="btn">取消</button>
          <button class="btn">应用(A)</button>
          <button class="btn">帮助</button>
        </div>
      </div>
    </div>
  </div>
</template>

<style>
body {
  margin: 0;
  background: #d4d0c8;
}
</style>

<style scoped>
.app {
  position: relative;
  display: flex;
  flex-direction: column;
  min-height: 100vh;
  overflow: hidden;
  font: 12px/16px 'Noto Sans', 'Noto Sans CJK SC', sans-serif;
  color: #111;
}
.app *,
.app *::before,
.app *::after {
  box-sizing: border-box;
}
button {
  margin: 0;
  padding: 0;
  border: 0;
  background: none;
  font: inherit;
  color: inherit;
}
svg {
  display: block;
  flex: none;
}
i {
  display: block;
  flex: none;
}
.defs {
  position: absolute;
}
.titlebar {
  display: flex;
  align-items: center;
  height: 23px;
  padding: 0 2px;
  background: #fff;
  color: #999;
}
.logo {
  width: 17px;
  height: 17px;
  margin-right: 4px;
}
.win-buttons {
  display: flex;
  margin-left: auto;
}
.win-buttons button {
  width: 46px;
  height: 20px;
  display: grid;
  place-items: center;
}
.win-buttons svg {
  width: 12px;
  height: 12px;
  fill: none;
  stroke: #888;
}
.menubar {
  display: flex;
  gap: 15px;
  height: 17px;
  padding-left: 7px;
  background: linear-gradient(#fdfdfe, #dadbde);
  color: #222;
}
.menubar button {
  line-height: 17px;
}
.toolbar {
  display: flex;
  height: 30px;
  padding-left: 3px;
  background: #ecf0f7;
  border-bottom: 1px solid #a0a0a0;
}
.tool-group {
  display: flex;
  align-items: center;
  height: 27px;
  padding-right: 2px;
  border-radius: 3px;
  background: linear-gradient(#fbfbfc, #d8dadd);
}
.tool {
  display: grid;
  place-items: center;
  width: 24px;
  height: 24px;
}
.tool svg {
  width: 16px;
  height: 16px;
}
.pressed {
  border: 1px solid #6a8ab4;
  border-radius: 2px;
  background: linear-gradient(#c4d6ee, #dce8f8);
}
.overflow {
  width: 15px;
  padding: 12px 0 0 2px;
}
.overflow svg {
  width: 7px;
  height: 7px;
}
.workarea {
  flex: 1;
  display: flex;
  gap: 7px;
  padding: 1px 1px 6px;
  background: linear-gradient(90deg, #d4d0c8, #f2f1ee);
}
.pane-head {
  display: flex;
  align-items: center;
  justify-content: space-between;
  height: 17px;
  padding: 0 4px 0 2px;
  background: #808080;
  color: #d0cca8;
}
.pane-head svg {
  width: 44px;
  height: 12px;
  fill: none;
  stroke: #d0cca8;
}
.browser {
  display: flex;
  flex-direction: column;
  width: 239px;
  background: #efefef;
  border-right: 1px solid #a0a0a0;
  border-bottom: 1px solid #a0a0a0;
}
.browser-body {
  flex: 1;
  display: flex;
  flex-direction: column;
  margin: 5px 5px 2px 4px;
  border: 1px solid #d8d8d8;
  border-top: 1px solid #707070;
  border-left: 2px solid #707070;
  background: #fff;
}
.filter {
  display: flex;
  align-items: center;
  height: 28px;
  padding-left: 5px;
  background: #efefef;
  border-bottom: 1px solid #a0a0a0;
  font: 11px/14px 'Liberation Sans', sans-serif;
}
.filter label {
  width: 31px;
}
.filter input {
  width: 139px;
  height: 20px;
  margin-right: 4px;
  padding: 0 3px;
  border: 1px solid #6c6c6c;
  background: #fff;
  font: inherit;
}
.filter button {
  display: grid;
  place-items: center;
  width: 22px;
  height: 22px;
}
.filter svg {
  width: 15px;
  height: 15px;
}
.tree {
  margin: 0;
  padding: 0 0 0 4px;
  list-style: none;
  font: 11px/16px 'Liberation Sans', 'Noto Sans CJK SC', sans-serif;
}
.tree li {
  display: flex;
  align-items: center;
  height: 16px;
}
.ti {
  width: 16px;
  height: 15px;
}
.lv0 span {
  margin-left: 5px;
}
.lv1 {
  padding-left: 4px;
}
.lv1 span {
  margin-left: 5px;
}
.lv2 {
  padding-left: 27px;
}
.lv2x {
  padding-left: 23px;
}
.lv2 span,
.lv2x span {
  margin-left: 5px;
}
.cjk {
  font-size: 12px;
  white-space: pre;
}
.cjk small {
  font-size: 11px;
}
.current {
  background: #efefef;
}
.exp {
  width: 9px;
  height: 9px;
  border: 1px solid #848484;
  background: linear-gradient(#2a3c78, #2a3c78) center / 5px 1px no-repeat, #fff;
}
.plus {
  background: linear-gradient(#2a3c78, #2a3c78) center / 5px 1px no-repeat, linear-gradient(#2a3c78, #2a3c78) center / 1px 5px no-repeat, #fff;
}
.dash {
  width: 6px;
  border-top: 1px dotted #808080;
}
.dash.long {
  width: 11px;
}
.browser-tabs {
  display: flex;
  align-items: flex-start;
  height: 23px;
  padding-left: 1px;
  border-top: 1px solid #d8d8d8;
  font: 10px/18px 'Liberation Mono', monospace;
}
.browser-tabs button {
  display: flex;
  align-items: center;
  gap: 5px;
  height: 19px;
  padding: 0 3px 0 4px;
  border-right: 1px solid #d0d0d0;
}
.browser-tabs .on {
  height: 22px;
  padding: 0 7px;
  background: #fff;
}
.browser-tabs svg {
  width: 16px;
  height: 16px;
}
.document {
  flex: 1;
  min-width: 0;
  display: flex;
  flex-direction: column;
}
.doc-tabs {
  display: flex;
  height: 19px;
  padding: 1px 0 0 4px;
  border-bottom: 1px solid #8c8a86;
}
.doc-slope {
  width: 16px;
  height: 18px;
}
.doc-tab {
  height: 18px;
  padding: 0 5px 0 5px;
  background: linear-gradient(#f4f3f0, #e4e1dc);
  font-weight: bold;
  line-height: 16px;
}
.doc-actions {
  display: flex;
  align-items: center;
  gap: 4px;
  margin-left: auto;
  padding-right: 5px;
}
.doc-actions svg {
  width: 12px;
  height: 12px;
}
.doc-frame {
  flex: 1;
  display: grid;
  grid-template: 1fr 17px / 1fr 17px;
  margin: 2px 2px 3px;
  border: 2px solid #808080;
  outline: 1px solid #a8a49c;
  outline-offset: 1px;
  background: #f0f0f0;
}
.canvas {
  position: relative;
  overflow: hidden;
  background: #fff;
}
.guide-h,
.guide-v {
  position: absolute;
  background: #000;
}
.guide-h {
  left: 0;
  right: 1px;
  top: 75px;
  height: 1px;
}
.guide-v {
  top: 0;
  bottom: 1px;
  width: 1px;
}
.guide-v.a {
  left: 388px;
}
.guide-v.b {
  left: 1073px;
}
.chev {
  width: 10px;
  height: 10px;
  fill: none;
  stroke: #505050;
  stroke-width: 2;
}
.vbar,
.gv {
  display: flex;
  flex-direction: column;
  align-items: center;
  justify-content: space-between;
}
.vbar {
  padding: 3px 0;
}
.vbar .thumb {
  width: 15px;
  height: 32px;
  background: #cdcdcd;
}
.hbar {
  display: flex;
  align-items: center;
  justify-content: space-between;
  padding: 0 4px 2px 3px;
}
.hbar .thumb {
  width: 87px;
  height: 15px;
  background: #cdcdcd;
}
.toolbox {
  display: flex;
  flex-direction: column;
  width: 178px;
  border: 1px solid #a0a0a0;
  border-top: 0;
}
.toolbox-body {
  flex: 1;
  margin: 1px;
  background: linear-gradient(90deg, #ecf1f7, #fff 95%);
}
.view-bar {
  display: flex;
  align-items: center;
  gap: 1px;
  height: 30px;
  padding: 0 0 2px 2px;
  background: linear-gradient(#fbfbfc, #d8dadd);
}
.sec-head {
  display: flex;
  align-items: center;
  gap: 3px;
  width: 100%;
  height: 22px;
  border-top: 1px solid #c4c4c4;
  background: linear-gradient(90deg, #e8e8e8, #f2f2f2);
  text-align: left;
}
.sec-head svg {
  width: 20px;
  height: 20px;
}
.palette {
  display: grid;
  grid-template-columns: repeat(6, 26px);
  grid-auto-rows: 26px;
  padding-left: 1px;
}
.status {
  position: relative;
  display: flex;
  align-items: flex-start;
  justify-content: space-between;
  height: 30px;
  padding-right: 13px;
  border-top: 1px solid #a0a0a0;
  background: linear-gradient(#fafafb, #d4d5d8);
}
.ime {
  display: flex;
  align-items: center;
  gap: 8px;
  height: 25px;
  margin-top: 3px;
  padding-right: 5px;
  border: 1px solid #b4cce8;
  border-left: 0;
  background: #fff;
}
.ime svg {
  width: 16px;
  height: 16px;
}
.ime .sogou {
  width: 32px;
  height: 30px;
  margin: -4px -3px 0 0;
}
.zh {
  width: 16px;
  font-size: 16px;
  font-weight: bold;
  line-height: 20px;
  color: #0a6cd8;
}
.dbms {
  width: 90px;
  height: 23px;
  margin-top: 3px;
  border: 1px solid #808080;
  line-height: 21px;
  text-align: center;
}
.watermark {
  position: absolute;
  right: 13px;
  top: -2px;
  font: 20px/24px 'Open Sans', 'Noto Sans CJK SC', sans-serif;
  font-weight: 300;
  color: rgba(110, 110, 110, 0.8);
  white-space: nowrap;
}
.meter {
  position: absolute;
  left: 0;
  top: 526px;
  display: flex;
  flex-direction: column;
  gap: 2px;
  width: 11px;
  height: 59px;
  padding: 7px 5px 0 2px;
  border: 1px solid #262a3c;
  border-left: 0;
  border-radius: 0 3px 3px 0;
  background: #474a5c;
}
.meter i {
  height: 1px;
}

.dialog {
  position: absolute;
  left: calc(50% - 365px);
  top: 235px;
  width: 731px;
  padding-bottom: 9px;
  border: 1px solid #707070;
  background: #f0f0f0;
  box-shadow: 0 3px 14px rgba(0, 0, 0, 0.4);
}
.dlg-title {
  display: flex;
  align-items: center;
  height: 30px;
  padding: 0 0 2px 8px;
  background: #fff;
}
.dlg-title > svg {
  width: 16px;
  height: 16px;
  margin-right: 5px;
}
.dlg-title .win-buttons svg {
  stroke: #000;
}
.dlg-title .faint svg {
  stroke: #c4c4c4;
}
.dlg-tabs {
  display: flex;
  align-items: flex-end;
  padding: 9px 0 0 9px;
}
.dlg-tabs button {
  height: 23px;
  border: 1px solid #dadada;
  border-width: 1px 0 0 1px;
  white-space: nowrap;
}
.dlg-tabs button:last-child {
  border-right-width: 1px;
}
.dlg-tabs .on {
  height: 25px;
  padding-bottom: 2px;
  background: #fff;
}
.page {
  margin: 0 8px;
  padding: 10px 13px 12px 12px;
  border: 1px solid #dcdcdc;
  box-shadow: inset 0 0 0 2px #fff;
}
.dlg-tools {
  display: flex;
  align-items: center;
  height: 21px;
  margin-bottom: 5px;
}
.dlg-tools button {
  display: grid;
  place-items: center;
  width: 23px;
  height: 21px;
}
.dlg-tools svg {
  width: 16px;
  height: 16px;
}
.dlg-tools .lit {
  border: 1px solid #90c8f6;
  background: #c0dcf3;
}
.sep {
  width: 1px;
  height: 18px;
  margin: 0 4px 0 3px;
  background: #909090;
}
.dlg-tools .tri,
.tri {
  width: 8px;
  height: 5px;
  margin-left: 5px;
  fill: #000;
}
.grid {
  margin-left: 1px;
  border: 1px solid #7c7c7c;
  border-right-color: #e4e4e4;
  border-bottom-color: #e4e4e4;
  font: 11px/14px 'Liberation Sans', 'Noto Sans CJK SC', sans-serif;
}
.grid-main {
  display: flex;
}
table {
  flex: 1;
  width: 0;
  table-layout: fixed;
  border-collapse: separate;
  border-spacing: 0;
  background: #fff;
}
thead th {
  height: 19px;
  padding: 0;
  border-right: 2px solid #6c6c6c;
  border-bottom: 2px solid #6c6c6c;
  background: #f0f0f0;
  font-weight: normal;
}
thead th:last-child {
  border-right: 0;
}
thead .dim {
  color: #8a8a8a;
}
thead div {
  display: flex;
  height: 17px;
  padding-top: 1px;
}
thead span {
  flex: 1;
  min-width: 0;
  overflow: hidden;
  line-height: 16px;
  text-align: center;
  white-space: nowrap;
}
thead button {
  display: grid;
  place-items: center;
  width: 15px;
  border: 1px solid #fff;
  border-right-color: #909090;
  border-bottom-color: #909090;
  background: #ececec;
}
thead svg {
  width: 7px;
  height: 5px;
  fill: #4a3cb0;
}
tbody th,
tbody td {
  height: 15px;
  padding: 0 0 0 3px;
  overflow: hidden;
  line-height: 14px;
  text-align: left;
  font-weight: normal;
  white-space: nowrap;
}
tbody th {
  padding-left: 5px;
  border-right: 2px solid #6c6c6c;
  border-bottom: 2px solid #8c8c8c;
  background: #f0f0f0;
  line-height: 13px;
}
tbody th svg {
  width: 10px;
  height: 8px;
  margin-left: 12px;
}
tbody td {
  border-right: 1px dotted #6c6c6c;
  border-bottom: 1px dotted #6c6c6c;
}
tbody td:last-child {
  border-right: 0;
}
tbody .zhc {
  font-size: 12px;
}
.sel td {
  background: #000;
  border-right-color: #000;
  color: #fff;
}
.sel th {
  border: 1px dotted #333;
}
tbody .chk {
  padding: 0;
}
.chk input {
  appearance: none;
  display: grid;
  place-items: center;
  width: 13px;
  height: 13px;
  margin: 1px auto 0;
  border: 1px solid #333;
  background: #fff;
}
.chk input:checked::after {
  content: '';
  width: 9px;
  height: 5px;
  margin-top: -3px;
  border: solid #444;
  border-width: 0 0 1px 1px;
  transform: rotate(-45deg);
}
.chk input.hot {
  border-color: #0a5a9c;
  background: #cce4f7;
}
.chk input.hot:checked::after {
  border-color: #0a5a9c;
}
.sel .chk input {
  border-color: #ccc;
  background: #000;
}
.sel .chk input.hot {
  border-color: #f5a563;
  background: #331b08;
}
tbody .coll {
  overflow: visible;
}
.coll {
  position: relative;
}
.marked {
  position: absolute;
  left: -1px;
  top: -5px;
  padding: 1px 1px 1px 2px;
  border: 3px solid #f5200f;
  border-left-width: 2px;
  border-right-width: 2px;
  border-radius: 4px;
  line-height: 16px;
}
.gv {
  width: 17px;
  background: #f0f0f0;
}
.gv .chev {
  margin: 3px 0;
}
.gthumb {
  background: #cdcdcd;
}
.gv .gthumb {
  flex: 1;
  width: 15px;
}
.raised {
  display: grid;
  place-items: center;
  width: 17px;
  height: 17px;
  border: 1px solid #fff;
  border-right: 2px solid #6c6c6c;
  border-bottom: 2px solid #6c6c6c;
  background: #f0f0f0;
}
.gv .raised svg {
  width: 8px;
  height: 8px;
  fill: #000;
  stroke: #000;
}
.gh {
  display: flex;
  align-items: center;
  height: 17px;
  padding-right: 16px;
}
.gh .raised svg {
  width: 12px;
  height: 12px;
  fill: none;
  stroke: #000;
  stroke-width: 2;
}
.gh .dim svg {
  stroke: #666;
}
.gh .chev {
  margin: 0 3px;
}
.gh .gthumb {
  flex: 1;
  height: 15px;
  margin-left: 48px;
}
.dlg-foot {
  display: flex;
  align-items: center;
  padding: 10px 7px 0;
  font: 11px/14px 'Liberation Sans', 'Noto Sans CJK SC', sans-serif;
}
.btn {
  width: 86px;
  height: 28px;
  border: 1px solid #adadad;
  background: #e1e1e1;
  font-size: 12px;
}
.more {
  width: 72px;
  font-size: 11px;
}
.primary {
  border: 2px solid #0078d7;
}
.menu-btn {
  display: flex;
  align-items: center;
  margin-left: 7px;
}
.sheet {
  width: 16px;
  height: 16px;
}
.menu-btn .tri {
  margin-left: 7px;
}
.actions {
  display: flex;
  gap: 9px;
  margin-left: auto;
}
</style>
